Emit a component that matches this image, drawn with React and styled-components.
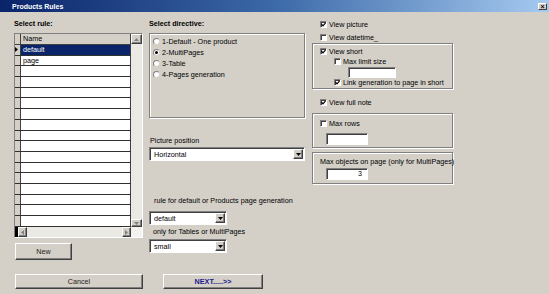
import React from 'react';
import styled, { createGlobalStyle } from 'styled-components';

const Global = createGlobalStyle`
  body {
    margin: 0;
    background: #d4d0c8;
    font-family: "Liberation Sans", Arial, sans-serif;
    font-size: 7.2px;
    color: #000;
  }
`;

const Window = styled.div`
  width: 549px;
  height: 294px;
  background: #d4d0c8;
  overflow: hidden;
`;

const TitleBar = styled.div`
  height: 12px;
  box-sizing: border-box;
  display: flex;
  align-items: center;
  justify-content: space-between;
  padding: 0 2px 0 12px;
  background: linear-gradient(to right, #0a246a 0%, #3c69a8 50%, #a6caf0 100%);
  color: #fff;
  font-weight: bold;
  font-size: 7px;
`;

const CloseBox = styled.div`
  width: 9px;
  height: 7px;
  box-sizing: border-box;
  display: flex;
  align-items: center;
  justify-content: center;
  background: #d4d0c8;
  border-top: 1px solid #fff;
  border-left: 1px solid #fff;
  border-right: 1px solid #404040;
  border-bottom: 1px solid #404040;
  color: #000;
  font-size: 7px;
  line-height: 5px;
`;

const Main = styled.div`
  display: flex;
  align-items: flex-start;
  padding: 7px 0 0 14px;
`;

const Column = styled.div`
  display: flex;
  flex-direction: column;
  width: ${(p) => p.$w}px;
  margin-left: ${(p) => p.$ml || 0}px;
`;

const Label = styled.div`
  line-height: 10px;
  height: 10px;
  white-space: nowrap;
  font-weight: ${(p) => (p.$bold ? 'bold' : 'normal')};
  margin-top: ${(p) => p.$mt || 0}px;
  padding-left: ${(p) => p.$pl || 0}px;
`;

/* ---------- data grid ---------- */

const GridFrame = styled.div`
  margin-top: 4px;
  width: 129px;
  height: 205px;
  box-sizing: border-box;
  border-top: 1px solid #808080;
  border-left: 1px solid #808080;
  border-right: 1px solid #fff;
  border-bottom: 1px solid #fff;
  display: grid;
  grid-template-columns: 1fr 11px;
  grid-template-rows: 1fr 10px;
  background: #d4d0c8;
`;

const Table = styled.div`
  display: flex;
  flex-direction: column;
  overflow: hidden;
  background: #fff;
`;

const Row = styled.div`
  display: flex;
  height: ${(p) => (p.$header ? 11 : 10.7)}px;
  flex-shrink: 0;
  box-sizing: border-box;
  border-bottom: 1px solid ${(p) => (p.$header ? '#404040' : '#303030')};
`;

const Indicator = styled.div`
  width: 5px;
  flex-shrink: 0;
  background: #d4d0c8;
  border-right: 1px solid #404040;
  display: flex;
  align-items: center;
`;

const Cell = styled.div`
  flex: 1;
  border-right: 1px solid #404040;
  padding-left: 2px;
  line-height: 9.5px;
  background: ${(p) => (p.$header ? '#d4d0c8' : p.$selected ? '#0a246a' : '#fff')};
  color: ${(p) => (p.$selected ? '#fff' : '#000')};
`;

const VScroll = styled.div`
  display: flex;
  flex-direction: column;
  justify-content: space-between;
  background: #ebe9e3;
`;

const HScroll = styled.div`
  display: flex;
  background: #ebe9e3;
`;

const Corner = styled.div`
  background: #f4f3f0;
`;

const BlackStub = styled.div`
  width: 3px;
  background: #000;
`;

const ArrowBtn = styled.div`
  width: ${(p) => p.$w}px;
  height: ${(p) => p.$h}px;
  flex-shrink: 0;
  box-sizing: border-box;
  display: flex;
  align-items: center;
  justify-content: center;
  background: #d4d0c8;
  border-top: 1px solid #fff;
  border-left: 1px solid #fff;
  border-right: 1px solid #404040;
  border-bottom: 1px solid #404040;
  box-shadow: inset -1px -1px 0 #808080;
`;

const Tri = ({ dir, color = '#000' }) => {
  const vertical = dir === 'up' || dir === 'down';
  const pts = {
    down: '0,0 5,0 2.5,3',
    up: '0,3 5,3 2.5,0',
    left: '3,0 3,5 0,2.5',
    right: '0,0 0,5 3,2.5',
  }[dir];
  return (
    <svg width={vertical ? 5 : 3} height={vertical ? 3 : 5} viewBox={vertical ? '0 0 5 3' : '0 0 3 5'}>
      <polygon points={pts} fill={color} />
    </svg>
  );
};

/* ---------- form controls ---------- */

const Button = styled.button`
  width: ${(p) => p.$w}px;
  height: ${(p) => p.$h}px;
  margin-left: ${(p) => p.$ml || 0}px;
  margin-top: ${(p) => p.$mt || 0}px;
  padding: 0;
  box-sizing: border-box;
  background: #d4d0c8;
  border-top: 1px solid #fff;
  border-left: 1px solid #fff;
  border-right: 1px solid #404040;
  border-bottom: 1px solid #404040;
  box-shadow: inset -1px -1px 0 #808080;
  font-family: "Liberation Sans", Arial, sans-serif;
  font-size: 7.2px;
  font-weight: ${(p) => (p.$primary ? 'bold' : 'normal')};
  color: ${(p) => (p.$primary ? '#1c1c8a' : '#222')};
`;

const GroupBox = styled.div`
  box-sizing: border-box;
  height: ${(p) => p.$h}px;
  margin-top: ${(p) => p.$mt || 0}px;
  padding: ${(p) => p.$pad};
  border: 1px solid #808080;
  box-shadow: 1px 1px 0 #fff, inset 1px 1px 0 #fff;
  display: flex;
  flex-direction: column;
`;

const RadioRow = styled.div`
  display: flex;
  align-items: center;
  height: 11px;
  gap: 2px;
`;

const RadioDot = styled.span`
  width: 7px;
  height: 7px;
  box-sizing: border-box;
  border-radius: 50%;
  background: #fff;
  border: 1px solid #808080;
  border-right-color: #d4d0c8;
  border-bottom-color: #d4d0c8;
  display: flex;
  align-items: center;
  justify-content: center;
  &::after {
    content: '';
    width: 3px;
    height: 3px;
    border-radius: 50%;
    background: ${(p) => (p.$on ? '#000' : 'transparent')};
  }
`;

const CheckRow = styled.div`
  display: flex;
  align-items: center;
  gap: 2px;
  height: ${(p) => p.$h || 10}px;
  margin-top: ${(p) => p.$mt || 0}px;
  padding-left: ${(p) => p.$pl || 0}px;
  white-space: nowrap;
`;

const Box = styled.span`
  width: 7px;
  height: 7px;
  flex-shrink: 0;
  box-sizing: border-box;
  background: #fff;
  border-top: 1px solid #808080;
  border-left: 1px solid #808080;
  border-right: 1px solid #fff;
  border-bottom: 1px solid #fff;
  box-shadow: inset 1px 1px 0 #404040;
  display: flex;
  align-items: center;
  justify-content: center;
`;

const CheckBox = ({ on }) => (
  <Box>
    {on && (
      <svg width="5" height="5" viewBox="0 0 5 5">
        <path d="M0.5 2.2 L2 3.8 L4.6 0.8" stroke="#000" strokeWidth="1.2" fill="none" />
      </svg>
    )}
  </Box>
);

const Check = ({ on, children, ...rest }) => (
  <CheckRow {...rest}>
    <CheckBox on={on} />
    <span>{children}</span>
  </CheckRow>
);

const Field = styled.div`
  width: ${(p) => p.$w}px;
  height: ${(p) => p.$h}px;
  margin-top: ${(p) => p.$mt || 0}px;
  margin-left: ${(p) => p.$ml || 0}px;
  box-sizing: border-box;
  background: #fff;
  border-top: 1px solid #808080;
  border-left: 1px solid #808080;
  border-right: 1px solid #fff;
  border-bottom: 1px solid #fff;
  box-shadow: inset 1px 1px 0 #404040;
  text-align: right;
  padding-right: 5px;
  line-height: ${(p) => p.$h - 2}px;
`;

const SelectBox = styled.div`
  width: ${(p) => p.$w}px;
  height: 14px;
  margin-top: ${(p) => p.$mt || 0}px;
  box-sizing: border-box;
  display: flex;
  align-items: center;
  justify-content: space-between;
  background: #fff;
  border-top: 1px solid #808080;
  border-left: 1px solid #808080;
  border-right: 1px solid #fff;
  border-bottom: 1px solid #fff;
  box-shadow: inset 1px 1px 0 #404040;
  padding: 1px 1px 1px 4px;
`;

const Select = ({ w, mt, value }) => (
  <SelectBox $w={w} $mt={mt}>
    <span>{value}</span>
    <ArrowBtn $w={10} $h={10}>
      <Tri dir="down" />
    </ArrowBtn>
  </SelectBox>
);

const Footer = styled.div`
  display: flex;
  margin-top: 14px;
  padding-left: 15px;
`;

const ruleRows = ['default', 'page', ...Array(15).fill('')];

export default function App() {
  return (
    <Window>
      <Global />
      <TitleBar>
        <span>Products Rules</span>
        <CloseBox>×</CloseBox>
      </TitleBar>

      <Main>
        <Column $w={129}>
          <Label $bold>Select rule:</Label>
          <GridFrame>
            <Table>
              <Row $header>
                <Indicator />
                <Cell $header>Name</Cell>
              </Row>
              {ruleRows.map((name, i) => (
                <Row key={i}>
                  <Indicator>{i === 0 && <Tri dir="right" />}</Indicator>
                  <Cell $selected={i === 0}>{name}</Cell>
                </Row>
              ))}
            </Table>
            <VScroll>
              <ArrowBtn $w={11} $h={10}>
                <Tri dir="up" color="#808080" />
              </ArrowBtn>
              <ArrowBtn $w={11} $h={8}>
                <Tri dir="down" color="#808080" />
              </ArrowBtn>
            </VScroll>
            <HScroll>
              <BlackStub />
              <ArrowBtn $w={9} $h={10}>
                <Tri dir="left" color="#808080" />
              </ArrowBtn>
              <div style={{ flex: 1 }} />
              <ArrowBtn $w={9} $h={10}>
                <Tri dir="right" color="#808080" />
              </ArrowBtn>
            </HScroll>
            <Corner />
          </GridFrame>
          <Button $w={57} $h={17} $ml={1} $mt={5}>New</Button>
        </Column>

        <Column $w={156} $ml={6}>
          <Label $bold>Select directive:</Label>
          <GroupBox $h={85} $mt={4} $pad="2px 0 0 3px">
            <RadioRow><RadioDot /><span>1-Default - One product</span></RadioRow>
            <RadioRow><RadioDot $on /><span>2-MultiPages</span></RadioRow>
            <RadioRow><RadioDot /><span>3-Table</span></RadioRow>
            <RadioRow><RadioDot /><span>4-Pages generation</span></RadioRow>
          </GroupBox>
          <Label $mt={18} $pl={1}>Picture position</Label>
          <Select w={156} mt={1} value="Horizontal" />
          <Label $mt={35} $pl={5}>rule for default or Products page generation</Label>
          <Select w={78} mt={5} value="default" />
          <Label $mt={2} $pl={4}>only for Tables or MultiPages</Label>
          <Select w={78} mt={2} value="small" />
        </Column>

        <Column $w={141} $ml={7}>
          <Check on $pl={8}>View picture</Check>
          <Check $pl={8} $mt={3}>View datetime_</Check>
          <GroupBox $h={46} $mt={1} $pad="2px 0 0 7px">
            <Check on>View short</Check>
            <Check $pl={14}>Max limit size</Check>
            <Field $w={48} $h={11} $mt={1} $ml={28} />
            <Check on $pl={14} $h={9}>Link generation to page in short</Check>
          </GroupBox>
          <Check on $pl={8} $mt={8}>View full note</Check>
          <GroupBox $h={35} $mt={6} $pad="4px 0 0 7px">
            <Check>Max rows</Check>
            <Field $w={42} $h={12} $mt={5} $ml={6} />
          </GroupBox>
          <GroupBox $h={32} $mt={4} $pad="4px 0 0 7px">
            <Label>Max objects on page (only for MultiPages)</Label>
            <Field $w={42} $h={12} $mt={1} $ml={6}>3</Field>
          </GroupBox>
        </Column>
      </Main>

      <Footer>
        <Button $w={128} $h={15}>Cancel</Button>
        <Button $w={100} $h={15} $ml={20} $primary>NEXT.....&gt;&gt;</Button>
      </Footer>
    </Window>
  );
}
